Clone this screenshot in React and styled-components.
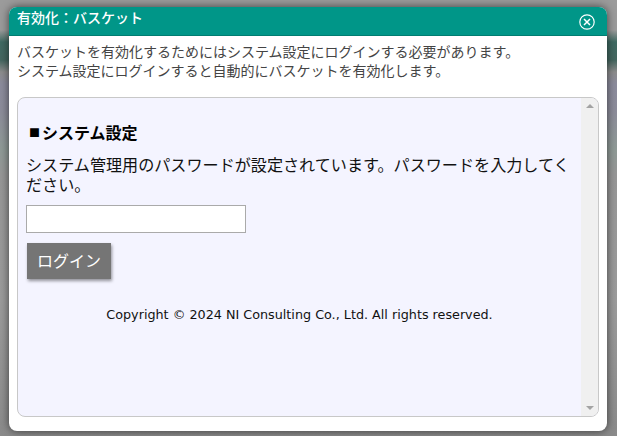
import React from "react";
import styled, { createGlobalStyle } from "styled-components";

const GlobalStyle = createGlobalStyle`
  html, body {
    margin: 0;
    padding: 0;
    height: 100%;
  }
  body {
    background: #9b9b9b;
    font-family: "Noto Sans CJK JP", "Liberation Sans", sans-serif;
    overflow: hidden;
  }
`;

const Overlay = styled.div`
  width: 617px;
  height: 436px;
  box-sizing: border-box;
  padding: 7px 10px 5px 9px;
  background: linear-gradient(
    180deg,
    #9b9b9b 0,
    #9b9b9b 30px,
    #3f6a62 42px,
    #44665f 60px,
    #8c8c8c 72px,
    #8b8b9c 84px,
    #8c8c9a 110px,
    #8f9a96 150px,
    #969696 175px,
    #9b9b9b 300px,
    #8f8f8f 400px,
    #8a8a8a 436px
  );
`;

const Dialog = styled.div`
  height: 424px;
  display: flex;
  flex-direction: column;
  background: #fff;
  border-radius: 8px;
  overflow: hidden;
  box-shadow: 0 0 8px rgba(0, 0, 0, 0.6);
`;

const Header = styled.div`
  height: 29px;
  flex: none;
  display: flex;
  align-items: center;
  justify-content: space-between;
  padding: 0 12px 0 8px;
  background: #009688;
  border-bottom: 1px solid #007d71;
  box-sizing: border-box;
  color: #fff;
  font-size: 14px;
`;

const Title = styled.span`
  font-weight: 500;
  line-height: 20px;
  margin-top: -9px;
`;

const CloseButton = styled.span`
  display: flex;
  width: 16px;
  height: 16px;
  margin-bottom: -1px;
`;

const Body = styled.div`
  flex: 1;
  display: flex;
  flex-direction: column;
  padding: 6px 8px 14px 8px;
  min-height: 0;
`;

const Lead = styled.p`
  margin: 0 0 17px;
  font-size: 14px;
  line-height: 19px;
  color: #444;
`;

const Frame = styled.div`
  flex: 1;
  display: flex;
  min-height: 0;
  background: #f4f4ff;
  border: 1px solid #c8c8c8;
  border-radius: 8px;
  overflow: hidden;
`;

const Content = styled.div`
  flex: 1;
  padding: 23px 8px 0;
  color: #111;
`;

const Heading = styled.h2`
  display: flex;
  align-items: center;
  margin: 0 0 11px 3px;
  font-size: 16px;
  line-height: 22px;
  font-weight: 700;
  color: #000;
`;

const Marker = styled.span`
  font-size: 11px;
  width: 13px;
`;

const Message = styled.p`
  margin: 0 0 11px;
  font-size: 16.1px;
  line-height: 20px;
`;

const PasswordInput = styled.input`
  display: block;
  width: 220px;
  height: 28px;
  box-sizing: border-box;
  border: 1px solid #aaa;
  background: #fff;
  margin: 0 0 10px;
  padding: 0 4px;
`;

const LoginButton = styled.button`
  display: block;
  width: 84px;
  height: 36px;
  margin: 0 0 0 1px;
  padding: 0 0 3px;
  border: none;
  background: #757575;
  color: #fff;
  font-family: inherit;
  font-size: 16px;
  box-shadow: 1px 2px 3px rgba(0, 0, 0, 0.4);
`;

const Copyright = styled.p`
  margin: 27px 0 0;
  text-align: center;
  font-family: "DejaVu Sans", sans-serif;
  font-size: 12.75px;
  line-height: 18px;
  color: #111;
`;

const ScrollTrack = styled.div`
  flex: none;
  width: 17px;
  display: flex;
  flex-direction: column;
  justify-content: space-between;
  align-items: center;
  padding: 6px 0;
  box-sizing: border-box;
  background: #f0f0f0;
`;

const Arrow = styled.span`
  width: 0;
  height: 0;
  border-left: 4px solid transparent;
  border-right: 4px solid transparent;
  ${({ $up }) =>
    $up ? "border-bottom: 4px solid #a3a3a3;" : "border-top: 4px solid #a3a3a3;"}
`;

const App = () => {
  return (
    <Overlay>
      <GlobalStyle />
      <Dialog>
        <Header>
          <Title>有効化：バスケット</Title>
          <CloseButton>
            <svg viewBox="0 0 16 16" width="16" height="16" fill="none" stroke="#fff">
              <circle cx="8" cy="8" r="7.2" strokeWidth="1.2" />
              <path d="M5 5l6 6M11 5l-6 6" strokeWidth="1.5" />
            </svg>
          </CloseButton>
        </Header>
        <Body>
          <Lead>
            バスケットを有効化するためにはシステム設定にログインする必要があります。
            <br />
            システム設定にログインすると自動的にバスケットを有効化します。
          </Lead>
          <Frame>
            <Content>
              <Heading>
                <Marker>■</Marker>システム設定
              </Heading>
              <Message>
                システム管理用のパスワードが設定されています。パスワードを入力してください。
              </Message>
              <PasswordInput type="password" />
              <LoginButton>ログイン</LoginButton>
              <Copyright>Copyright © 2024 NI Consulting Co., Ltd. All rights reserved.</Copyright>
            </Content>
            <ScrollTrack>
              <Arrow $up />
              <Arrow />
            </ScrollTrack>
          </Frame>
        </Body>
      </Dialog>
    </Overlay>
  );
};

export default App;
